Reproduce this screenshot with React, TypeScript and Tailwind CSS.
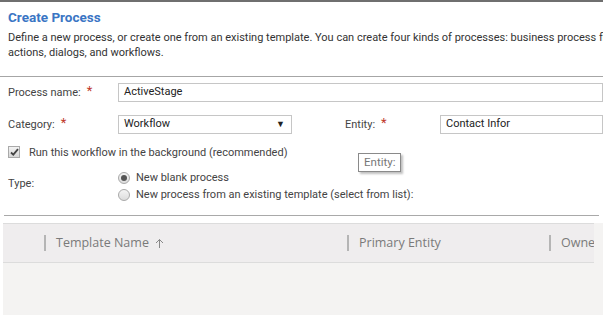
import React from "react"

const font = { fontFamily: 'Roboto, "Open Sans", sans-serif' }
const gridFont = { fontFamily: '"Open Sans", "Noto Sans", sans-serif' }

function Required() {
  return <span className="ml-[6px] text-[#c0392b] text-[13px] leading-none relative top-[-3px]">*</span>
}

function Radio({ checked }: { checked?: boolean }) {
  return (
    <span className="w-[12px] h-[12px] rounded-full border border-[#a9a9a9] bg-gradient-to-b from-[#f4f4f4] to-[#dcdcdc] flex items-center justify-center">
      {checked && <span className="w-[6px] h-[6px] rounded-full bg-[#555]" />}
    </span>
  )
}

export default function App() {
  return (
    <div className="relative w-[603px] h-[315px] overflow-hidden bg-white text-[#333]" style={font}>
      {/* clipped toolbar above */}
      <div className="h-[2px] bg-[#6f6f6f]" />

      {/* header */}
      <div className="px-[8px] pt-[6px] h-[75px] border-b border-[#a6a6a6]">
        <h1 className="text-[13.5px] font-bold text-[#3a75c4] leading-[18px]">Create Process</h1>
        <p className="mt-[4px] text-[11px] leading-[15px] text-[#333] whitespace-nowrap">
          Define a new process, or create one from an existing template. You can create four kinds of processes: business process flows,
          <br />
          actions, dialogs, and workflows.
        </p>
      </div>

      {/* form */}
      <div className="pt-[6px] text-[11px] text-[#444]">
        <div className="flex items-center h-[19px]">
          <div className="w-[118px] pl-[8px] pt-[2px] flex items-center">
            Process name:
            <Required />
          </div>
          <div className="flex-1 h-[19px] border border-[#c6c6c6] pl-[5px] flex items-center text-[#222] whitespace-nowrap">
            ActiveStage
          </div>
        </div>

        <div className="flex items-center h-[19px] mt-[13px]">
          <div className="w-[118px] pl-[8px] pt-[2px] flex items-center">
            Category:
            <Required />
          </div>
          <div className="w-[174px] h-[19px] border border-[#c6c6c6] pl-[5px] pr-[6px] flex items-center justify-between text-[#222]">
            <span>Workflow</span>
            <span className="text-[9px]">▼</span>
          </div>
          <div className="w-[53px]" />
          <div className="w-[95px] pt-[2px] flex items-center">
            Entity:
            <Required />
          </div>
          <div className="flex-1 h-[19px] border border-[#c6c6c6] pl-[5px] flex items-center text-[#222] whitespace-nowrap">
            Contact Infor
          </div>
        </div>

        <div className="flex items-center h-[12px] mt-[12px] pl-[8px]">
          <span className="w-[12px] h-[12px] border border-[#a9a9a9] bg-gradient-to-b from-[#f3f3f3] to-[#d6d6d6] flex items-center justify-center">
            <svg width="9" height="8" viewBox="0 0 9 8">
              <path d="M1 4.5 L3.3 6.6 L8 1.2" stroke="#444" strokeWidth="1.8" fill="none" />
            </svg>
          </span>
          <span className="ml-[9px] pt-[2px]">Run this workflow in the background (recommended)</span>
        </div>

        <div className="flex mt-[14px]">
          <div className="w-[118px] pl-[8px] pt-[4px]">Type:</div>
          <div className="flex flex-col gap-[5px]">
            <div className="flex items-center h-[12px]">
              <Radio checked />
              <span className="ml-[6px]">New blank process</span>
            </div>
            <div className="flex items-center h-[12px]">
              <Radio />
              <span className="ml-[6px]">New process from an existing template (select from list):</span>
            </div>
          </div>
        </div>
      </div>

      {/* tooltip */}
      <div className="absolute left-[358px] top-[153px] h-[19px] px-[5px] border border-[#8a8a8a] bg-white text-[11.5px] text-[#777] flex items-center shadow-[2px_2px_2px_rgba(0,0,0,0.25)]">
        Entity:
      </div>

      <div className="mx-[4px] mt-[14px] border-t border-[#a9a9a9]" />

      {/* template grid */}
      <div className="ml-[3px] mt-[7px] h-[95px] bg-[#f4f3f2]" style={gridFont}>
        <div className="w-[591px] h-[40px] bg-[#efedee] border-t border-b border-[#dcdcdc] flex items-center text-[12.5px] text-[#7a7a7a] whitespace-nowrap overflow-hidden">
          <div className="w-[41px] shrink-0" />
          <div className="w-[303px] shrink-0 flex items-center">
            <span className="w-[2px] h-[16px] bg-[#b5b5b5]" />
            <span className="ml-[10px]">Template Name</span>
            <svg className="ml-[6px]" width="9" height="11" viewBox="0 0 9 11">
              <path d="M4.5 10 V1.5 M1 5 L4.5 1.5 L8 5" stroke="#888" strokeWidth="1" fill="none" />
            </svg>
          </div>
          <div className="w-[202px] shrink-0 flex items-center">
            <span className="w-[2px] h-[16px] bg-[#b5b5b5]" />
            <span className="ml-[10px]">Primary Entity</span>
          </div>
          <div className="flex items-center shrink-0">
            <span className="w-[2px] h-[16px] bg-[#b5b5b5] shrink-0" />
            <span className="ml-[10px]">Owner</span>
          </div>
        </div>
      </div>
    </div>
  )
}
